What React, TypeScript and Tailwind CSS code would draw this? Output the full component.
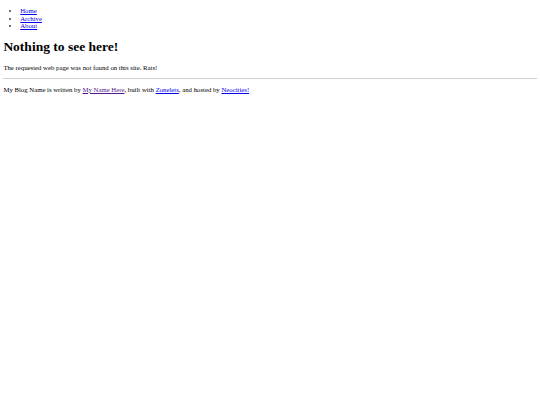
import React from 'react';

const navLinks = ['Home', 'Archive', 'About'];

export default function App() {
    return (
        <div className="min-h-[405px] bg-white px-[3.375px] pt-[6.75px] font-['Liberation_Serif',serif] text-[6.75px] leading-[7.76px] text-black">
            {/* Nav */}
            <ul className="list-disc pl-[16.875px] marker:text-[#444]">
                {navLinks.map((link) => (
                    <li key={link}>
                        <a href="#" className="text-[#0000ee] underline underline-offset-[0.5px]">{link}</a>
                    </li>
                ))}
            </ul>

            {/* Main */}
            <h1 className="mt-[9.05px] text-[13.5px] font-bold leading-[15.52px]">Nothing to see here!</h1>
            <p className="mt-[9.05px]">The requested web page was not found on this site. Rats!</p>

            {/* Footer */}
            <hr className="mt-[6.75px] border-0 border-t border-[#cfcfcf]" />
            <p className="mt-[6.75px]">
                My Blog Name is written by{' '}
                <a href="#" className="text-[#551a8b] underline underline-offset-[0.5px]">My Name Here</a>, built with{' '}
                <a href="#" className="text-[#0000ee] underline underline-offset-[0.5px]">Zonelets</a>, and hosted by{' '}
                <a href="#" className="text-[#0000ee] underline underline-offset-[0.5px]">Neocities!</a>
            </p>
        </div>
    );
}
